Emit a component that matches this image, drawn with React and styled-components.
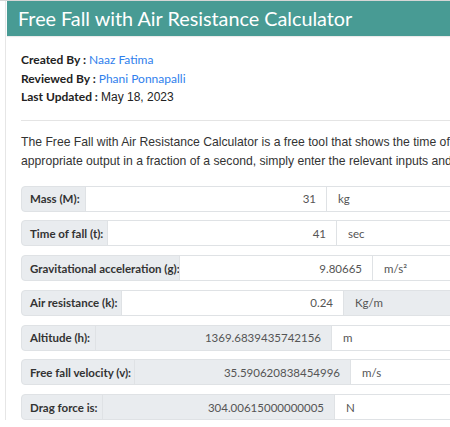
import React from "react";
import styled, { createGlobalStyle } from "styled-components";

const GlobalStyle = createGlobalStyle`
  html, body {
    margin: 0;
    padding: 0;
    background: #ffffff;
    overflow: hidden;
  }
  body {
    font-family: Lato, "Liberation Sans", sans-serif;
    color: #333;
  }
`;

const Page = styled.div`
  width: 560px;
  padding-left: 5px;
  border-top: 1px solid #d6d6d6;
`;

const Card = styled.div`
  border-left: 1px solid #e6e6e6;
  padding-left: 1px;
`;

const Header = styled.h1`
  margin: 0;
  height: 35px;
  background: #489b94;
  color: #ffffff;
  font-family: Lato, sans-serif;
  font-weight: 400;
  font-size: 19.8px;
  line-height: 35px;
  padding-left: 11px;
  box-shadow: 0 1px 1px rgba(0, 0, 0, 0.08);
`;

const Body = styled.div`
  padding: 16px 0 0 14px;
`;

const Meta = styled.div`
  display: flex;
  flex-direction: column;
  gap: 2px;
  font-size: 12px;
  line-height: 16.5px;
`;

const MetaRow = styled.div`
  color: #222;
`;

const MetaLabel = styled.b`
  font-weight: 700;
  margin-right: 3px;
`;

const Link = styled.a`
  color: #2f80ed;
  text-decoration: none;
`;

const Plain = styled.span`
  font-family: "Liberation Sans", Arial, sans-serif;
  font-size: 12px;
`;

const Rule = styled.hr`
  border: none;
  border-top: 1px solid #e4e4e4;
  margin: 14px 0 0 0;
`;

const Intro = styled.p`
  margin: 12px 0 15px 0;
  font-family: "Liberation Sans", Arial, sans-serif;
  font-size: 12.2px;
  line-height: 19px;
  color: #333;
  white-space: nowrap;
`;

const Rows = styled.div`
  display: flex;
  flex-direction: column;
  gap: 8.8px;
`;

const Row = styled.div`
  display: grid;
  grid-template-columns: ${(p) => p.$label}px ${(p) => p.$input}px 200px;
  height: 26px;
  font-size: 11.5px;
  white-space: nowrap;
`;

const Cell = styled.div`
  display: flex;
  align-items: center;
  border: 1px solid #dfe2e5;
  margin-left: -1px;
  background: ${(p) => (p.$gray ? "#e9ecef" : "#ffffff")};
`;

const Label = styled(Cell)`
  margin-left: 0;
  background: #e9ecef;
  border-radius: 4px 0 0 4px;
  padding-left: 8px;
  font-weight: 700;
  color: #333;
`;

const Value = styled(Cell)`
  justify-content: flex-end;
  padding-right: 10px;
  color: #555;
`;

const Unit = styled(Cell)`
  padding-left: 11px;
  color: #555;
`;

const rows = [
  { label: "Mass (M):", lw: 65, iw: 241, value: "31", unit: "kg" },
  { label: "Time of fall (t):", lw: 87, iw: 229, value: "41", unit: "sec" },
  { label: "Gravitational acceleration (g):", lw: 159, iw: 193, value: "9.80665", unit: <>m/s&sup2;</> },
  { label: "Air resistance (k):", lw: 101, iw: 222, value: "0.24", unit: "Kg/m", unitGray: true },
  { label: "Altitude (h):", lw: 75, iw: 236, value: "1369.6839435742156", unit: "m", out: true },
  { label: "Free fall velocity (v):", lw: 114, iw: 216, value: "35.590620838454996", unit: "m/s", out: true },
  { label: "Drag force is:", lw: 82, iw: 232, value: "304.00615000000005", unit: "N", out: true },
];

export default function App() {
  return (
    <>
      <GlobalStyle />
      <Page>
        <Card>
          <Header>Free Fall with Air Resistance Calculator</Header>
          <Body>
            <Meta>
              <MetaRow>
                <MetaLabel>Created By :</MetaLabel>
                <Link href="#">Naaz Fatima</Link>
              </MetaRow>
              <MetaRow>
                <MetaLabel>Reviewed By :</MetaLabel>
                <Link href="#">Phani Ponnapalli</Link>
              </MetaRow>
              <MetaRow>
                <MetaLabel>Last Updated :</MetaLabel>
                <Plain>May 18, 2023</Plain>
              </MetaRow>
            </Meta>
            <Rule />
            <Intro>
              The Free Fall with Air Resistance Calculator is a free tool that shows the time of fall, velocity and drag force. To get the
              <br />
              appropriate output in a fraction of a second, simply enter the relevant inputs and click on the calculate button.
            </Intro>
            <Rows>
              {rows.map((r) => (
                <Row key={r.label} $label={r.lw} $input={r.iw}>
                  <Label>{r.label}</Label>
                  <Value $gray={r.out}>{r.value}</Value>
                  <Unit $gray={r.unitGray}>{r.unit}</Unit>
                </Row>
              ))}
            </Rows>
          </Body>
        </Card>
      </Page>
    </>
  );
}
